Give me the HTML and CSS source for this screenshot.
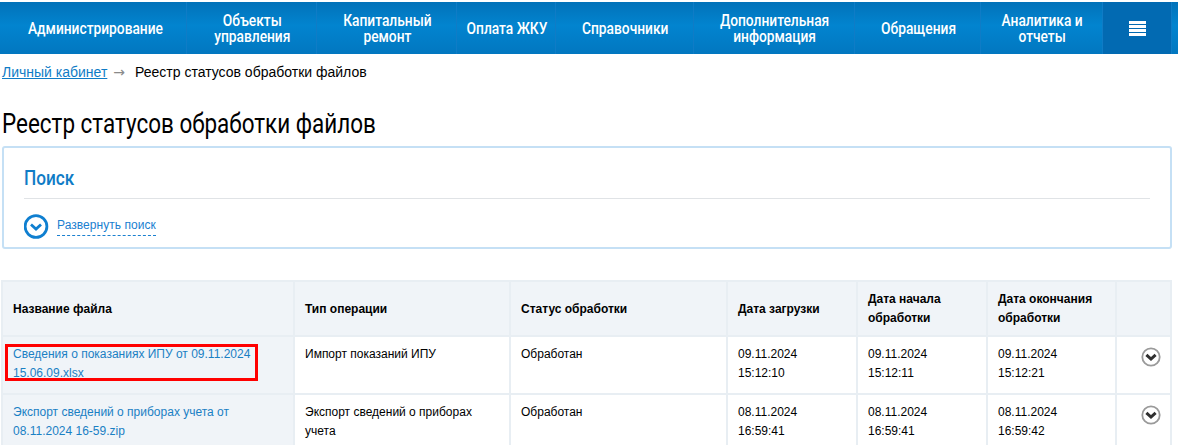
FILE: index.html
```html
<!DOCTYPE html>
<html lang="ru">
<head>
<meta charset="utf-8">
<title>Реестр статусов обработки файлов</title>
<link rel="stylesheet" href="styles.css">
</head>
<body>
<nav class="nav">
  <a class="nav-item w185"><span class="narrow">Администрирование</span></a>
  <a class="nav-item w130"><span class="narrow">Объекты<br>управления</span></a>
  <a class="nav-item w140"><span class="narrow">Капитальный<br>ремонт</span></a>
  <a class="nav-item w100"><span class="narrow">Оплата ЖКУ</span></a>
  <a class="nav-item w137"><span class="narrow">Справочники</span></a>
  <a class="nav-item w162"><span class="narrow">Дополнительная<br>информация</span></a>
  <a class="nav-item w126"><span class="narrow">Обращения</span></a>
  <a class="nav-item w122"><span class="narrow">Аналитика и<br>отчеты</span></a>
  <a class="nav-menu" aria-label="Меню">
    <svg width="17" height="15" viewBox="0 0 17 15"><path fill="#fff" d="M0 0h17v3H0zM0 4h17v3H0zM0 8h17v3H0zM0 12h17v3H0z"/></svg>
  </a>
  <span class="nav-rest"></span>
</nav>
<div class="crumbs"><a class="crumb-link">Личный кабинет</a><span class="crumb-arrow">→</span><span>Реестр статусов обработки файлов</span></div>
<h1 class="title"><span class="title-text">Реестр статусов обработки файлов</span></h1>
<section class="search">
  <h2 class="search-title"><span class="search-text">Поиск</span></h2>
  <div class="search-toggle">
    <svg class="toggle-icon" width="25" height="25" viewBox="0 0 25 25"><circle cx="12" cy="12.5" r="10.9" fill="none" stroke="#0f7fd0" stroke-width="2.8"/><path d="M7 10.5l5 4.5 5-4.5" fill="none" stroke="#0f7fd0" stroke-width="2.8"/></svg>
    <a class="toggle-link">Развернуть поиск</a>
  </div>
</section>
<div class="table-wrap">
<table class="grid">
  <colgroup>
    <col class="c1"><col class="c2"><col class="c3"><col class="c4"><col class="c5"><col class="c6"><col class="c7">
  </colgroup>
  <thead>
    <tr><th>Название файла</th><th>Тип операции</th><th>Статус обработки</th><th>Дата загрузки</th><th>Дата начала обработки</th><th>Дата окончания обработки</th><th></th></tr>
  </thead>
  <tbody>
    <tr>
      <td class="file"><a>Сведения о показаниях ИПУ от 09.11.2024 15.06.09.xlsx</a><span class="mark"></span></td>
      <td>Импорт показаний ИПУ</td><td>Обработан</td><td>09.11.2024<br>15:12:10</td><td>09.11.2024<br>15:12:11</td><td>09.11.2024<br>15:12:21</td>
      <td class="act"><svg width="20" height="20" viewBox="0 0 20 20"><circle cx="10" cy="10" r="8.7" fill="#fff" stroke="#9a9a9a" stroke-width="1.8"/><path d="M5.4 7.8l4.6 4.2 4.6-4.2" fill="none" stroke="#2f2f2f" stroke-width="3"/></svg></td>
    </tr>
    <tr>
      <td class="file"><a>Экспорт сведений о приборах учета от 08.11.2024 16-59.zip</a></td>
      <td>Экспорт сведений о приборах учета</td><td>Обработан</td><td>08.11.2024<br>16:59:41</td><td>08.11.2024<br>16:59:41</td><td>08.11.2024<br>16:59:42</td>
      <td class="act"><svg width="20" height="20" viewBox="0 0 20 20"><circle cx="10" cy="10" r="8.7" fill="#fff" stroke="#9a9a9a" stroke-width="1.8"/><path d="M5.4 7.8l4.6 4.2 4.6-4.2" fill="none" stroke="#2f2f2f" stroke-width="3"/></svg></td>
    </tr>
  </tbody>
</table>
</div>
</body>
</html>
```
FILE: styles.css
```css
* { box-sizing: border-box; }
html, body { margin: 0; padding: 0; background: #fff; overflow: hidden; }
body { height: 445px; font-family: "Liberation Sans", Arial, sans-serif; color: #000; }
.nav { display: flex; height: 52px; margin-top: 2px; background: linear-gradient(#0272b9, #0284cf 45%, #0277c0); }
.nav-item { display: flex; align-items: center; justify-content: center; text-align: center; color: #fff; font-family: "Roboto", sans-serif; font-weight: 500; font-size: 16px; line-height: 16px; padding: 2px 0 0 2px; border-right: 1px solid #0f7cc6; white-space: nowrap; }
.narrow { display: inline-block; transform: scaleX(.86); }
.w185 { width: 187px; padding-left: 4px; } .w130 { width: 130px; } .w140 { width: 140px; } .w100 { width: 99px; } .w137 { width: 138px; } .w162 { width: 161px; } .w126 { width: 126px; } .w122 { width: 122px; }
.nav-menu { width: 68px; display: flex; align-items: center; justify-content: center; background: #026ab2; }
.nav-rest { flex: 1; border-left: 1px solid #0f7cc6; }
.crumbs { padding: 9px 2px 0; height: 37px; font-size: 14px; line-height: 18px; display: flex; }
.crumb-link { color: #0f7cc6; text-decoration: underline; }
.crumb-arrow { font-family: "DejaVu Sans", sans-serif; color: #8a8a8a; margin: 0 10px 0 6px; }
.title { margin: 0; font-family: "Roboto", sans-serif; font-weight: 400; font-size: 27px; line-height: 32px; height: 56px; padding: 17px 2px 0; white-space: nowrap; }
.title-text { display: inline-block; transform: scaleX(.832); transform-origin: left center; }
.search { margin: -1px 6px 0 2px; height: 103px; padding: 18px 20px 0; border: 2px solid #c5e0f5; border-radius: 3px; }
.search-title { margin: 0; height: 33px; font-family: "Roboto", sans-serif; font-weight: 500; font-size: 20px; line-height: 24px; color: #0f7cc6; border-bottom: 1px solid #e0e3e6; }
.search-text { display: inline-block; transform: scaleX(.86); transform-origin: left center; }
.search-toggle { display: flex; align-items: center; gap: 8px; margin-top: 15px; }
.toggle-link { font-size: 12px; letter-spacing: .05px; line-height: 15px; color: #1a80d0; border-bottom: 1px dashed #1a80d0; padding-bottom: 2px; }
.table-wrap { margin: 31px 6px 0 1px; }
.grid { width: 1170px; table-layout: fixed; border-collapse: collapse; font-size: 12px; line-height: 19px; border: 2px solid #e8eef3; border-bottom: 0; }
.c1 { width: 292px; } .c2 { width: 216px; } .c3 { width: 217px; } .c4 { width: 130px; } .c5 { width: 130px; } .c6 { width: 129px; } .c7 { width: 55px; }
.grid th { height: 55px; padding: 1px 10px 0; background: #f0f4f8; text-align: left; font-weight: 700; border: 2px solid #e8eef3; vertical-align: middle; }
.grid td { height: 58px; padding: 8px 10px; vertical-align: top; border: 2px solid #e8eef3; }
.grid td.file { background: #f0f4f8; position: relative; }
.file a { color: #1a80c4; }
.mark { position: absolute; left: 2px; top: 7px; width: 253px; height: 37px; border: 3px solid #f00; }
.grid td.act { padding: 10px 0 0 24px; }
```
